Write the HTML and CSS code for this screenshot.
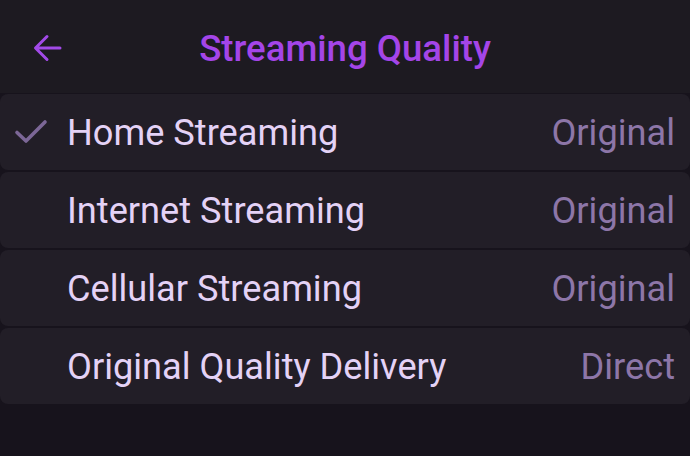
FILE: index.html
```html
<!DOCTYPE html>
<html>
<head>
<meta charset="utf-8">
<link rel="stylesheet" href="styles.css">
</head>
<body>
<div class="app">
  <header class="topbar">
    <span class="back">
      <svg width="32" height="32" viewBox="0 0 32 32"><path d="M29 16H5M16 4.5L4.5 16L16 27.5" fill="none" stroke="#a24ae8" stroke-width="3" stroke-linecap="round" stroke-linejoin="round"/></svg>
    </span>
    <h1 class="title">Streaming Quality</h1>
  </header>
  <div class="list">
    <div class="row">
      <span class="check"><svg width="34" height="26" viewBox="0 0 34 26"><path d="M3 13.5L12 22L31 3" fill="none" stroke="#7c6797" stroke-width="3.6" stroke-linecap="round" stroke-linejoin="round"/></svg></span>
      <span class="label">Home Streaming</span>
      <span class="value">Original</span>
    </div>
    <div class="row">
      <span class="check"></span>
      <span class="label">Internet Streaming</span>
      <span class="value">Original</span>
    </div>
    <div class="row">
      <span class="check"></span>
      <span class="label">Cellular Streaming</span>
      <span class="value">Original</span>
    </div>
    <div class="row">
      <span class="check"></span>
      <span class="label">Original Quality Delivery</span>
      <span class="value">Direct</span>
    </div>
  </div>
</div>
</body>
</html>
```
FILE: styles.css
```css
html, body {
  margin: 0;
  padding: 0;
  background: #17131c;
  font-family: Roboto, "Noto Sans", sans-serif;
}
.app {
  width: 690px;
  height: 456px;
  overflow: hidden;
}
.topbar {
  height: 93px;
  background: #1d1a21;
  display: flex;
  align-items: center;
  justify-content: center;
  position: relative;
}
.back {
  position: absolute;
  left: 31px;
  top: 32px;
  width: 32px;
  height: 32px;
  display: flex;
}
.title {
  margin: 0;
  font-size: 36.6px;
  font-weight: 500;
  color: #a445e8;
  padding-top: 4px;
}
.list {
  display: flex;
  flex-direction: column;
  gap: 2px;
  padding-top: 1px;
}
.row {
  height: 76px;
  background: #221e27;
  border-radius: 8px;
  display: flex;
  align-items: center;
  padding-right: 15px;
}
.check {
  width: 67px;
  display: flex;
  padding-left: 14px;
  box-sizing: border-box;
}
.label {
  flex: 1;
  font-size: 36.2px;
  color: #e4d2f6;
}
.value {
  font-size: 36.2px;
  color: #8d76a8;
}
```
